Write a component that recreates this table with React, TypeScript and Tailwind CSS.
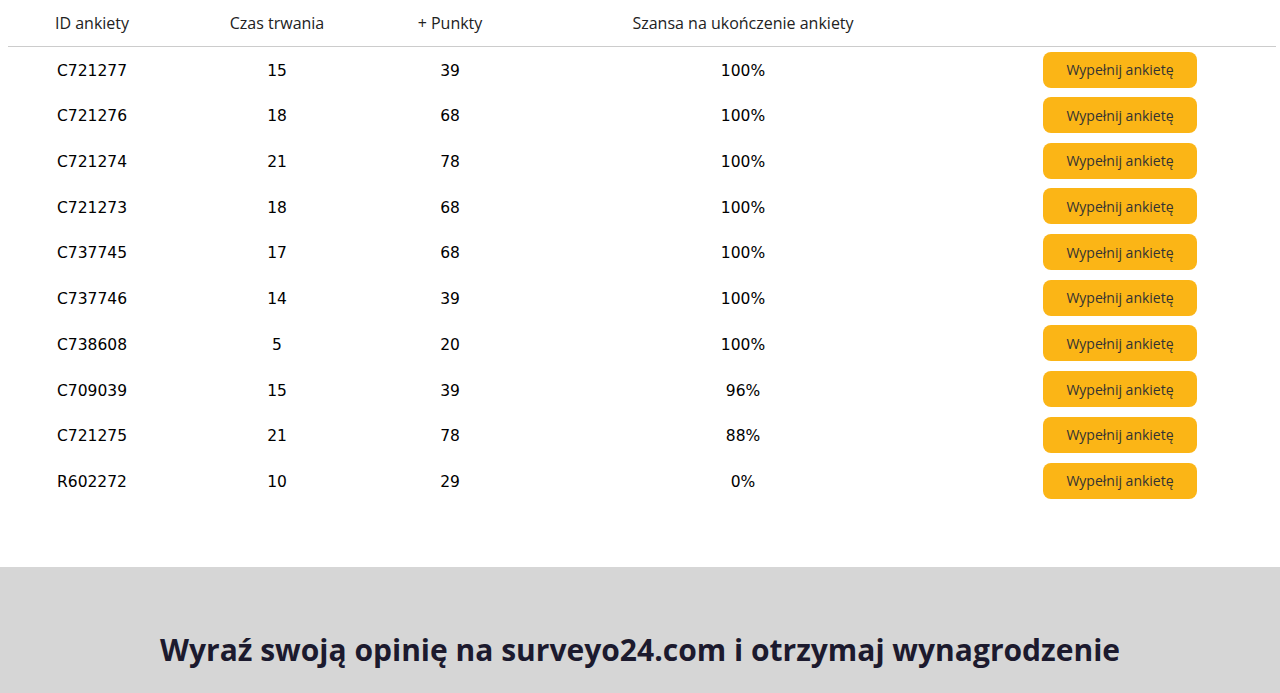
import React from "react";

interface Survey {
  id: string;
  duration: number;
  points: number;
  chance: string;
}

const surveys: Survey[] = [
  { id: "C721277", duration: 15, points: 39, chance: "100%" },
  { id: "C721276", duration: 18, points: 68, chance: "100%" },
  { id: "C721274", duration: 21, points: 78, chance: "100%" },
  { id: "C721273", duration: 18, points: 68, chance: "100%" },
  { id: "C737745", duration: 17, points: 68, chance: "100%" },
  { id: "C737746", duration: 14, points: 39, chance: "100%" },
  { id: "C738608", duration: 5, points: 20, chance: "100%" },
  { id: "C709039", duration: 15, points: 39, chance: "96%" },
  { id: "C721275", duration: 21, points: 78, chance: "88%" },
  { id: "R602272", duration: 10, points: 29, chance: "0%" },
];

const App: React.FC = () => {
  return (
    <div className="min-h-screen bg-white">
      <div className="pl-2 pr-1 pb-[64px]">
        <table className="w-full border-collapse table-fixed">
          <colgroup>
            <col className="w-[168px]" />
            <col className="w-[202px]" />
            <col className="w-[144px]" />
            <col className="w-[442px]" />
            <col />
          </colgroup>
          <thead>
            <tr className="h-[46px] border-b border-[#cccccc] text-[16px] text-[#222] font-['Open_Sans',sans-serif]">
              <th className="font-normal text-center">ID ankiety</th>
              <th className="font-normal text-center">Czas trwania</th>
              <th className="font-normal text-center">+ Punkty</th>
              <th className="font-normal text-center">Szansa na ukończenie ankiety</th>
              <th></th>
            </tr>
          </thead>
          <tbody className="text-[15.5px] text-black font-['DejaVu_Sans',sans-serif]">
            {surveys.map((s) => (
              <tr key={s.id} className="h-[45.7px]">
                <td className="text-center pt-[5px]">{s.id}</td>
                <td className="text-center pt-[5px]">{s.duration}</td>
                <td className="text-center pt-[5px]">{s.points}</td>
                <td className="text-center pt-[5px]">{s.chance}</td>
                <td className="text-center pt-[1px]">
                  <button className="w-[154px] h-[36px] rounded-lg bg-[#fbb516] text-[14px] text-[#333] font-['Open_Sans',sans-serif]">
                    Wypełnij ankietę
                  </button>
                </td>
              </tr>
            ))}
          </tbody>
        </table>
      </div>
      <div className="bg-[#d6d6d6] pt-[60px] pb-[40px]">
        <h2 className="text-center text-[30px] font-bold text-[#1c1a2e] font-['Open_Sans',sans-serif]">
          Wyraź swoją opinię na surveyo24.com i otrzymaj wynagrodzenie
        </h2>
      </div>
    </div>
  );
};

export default App;
